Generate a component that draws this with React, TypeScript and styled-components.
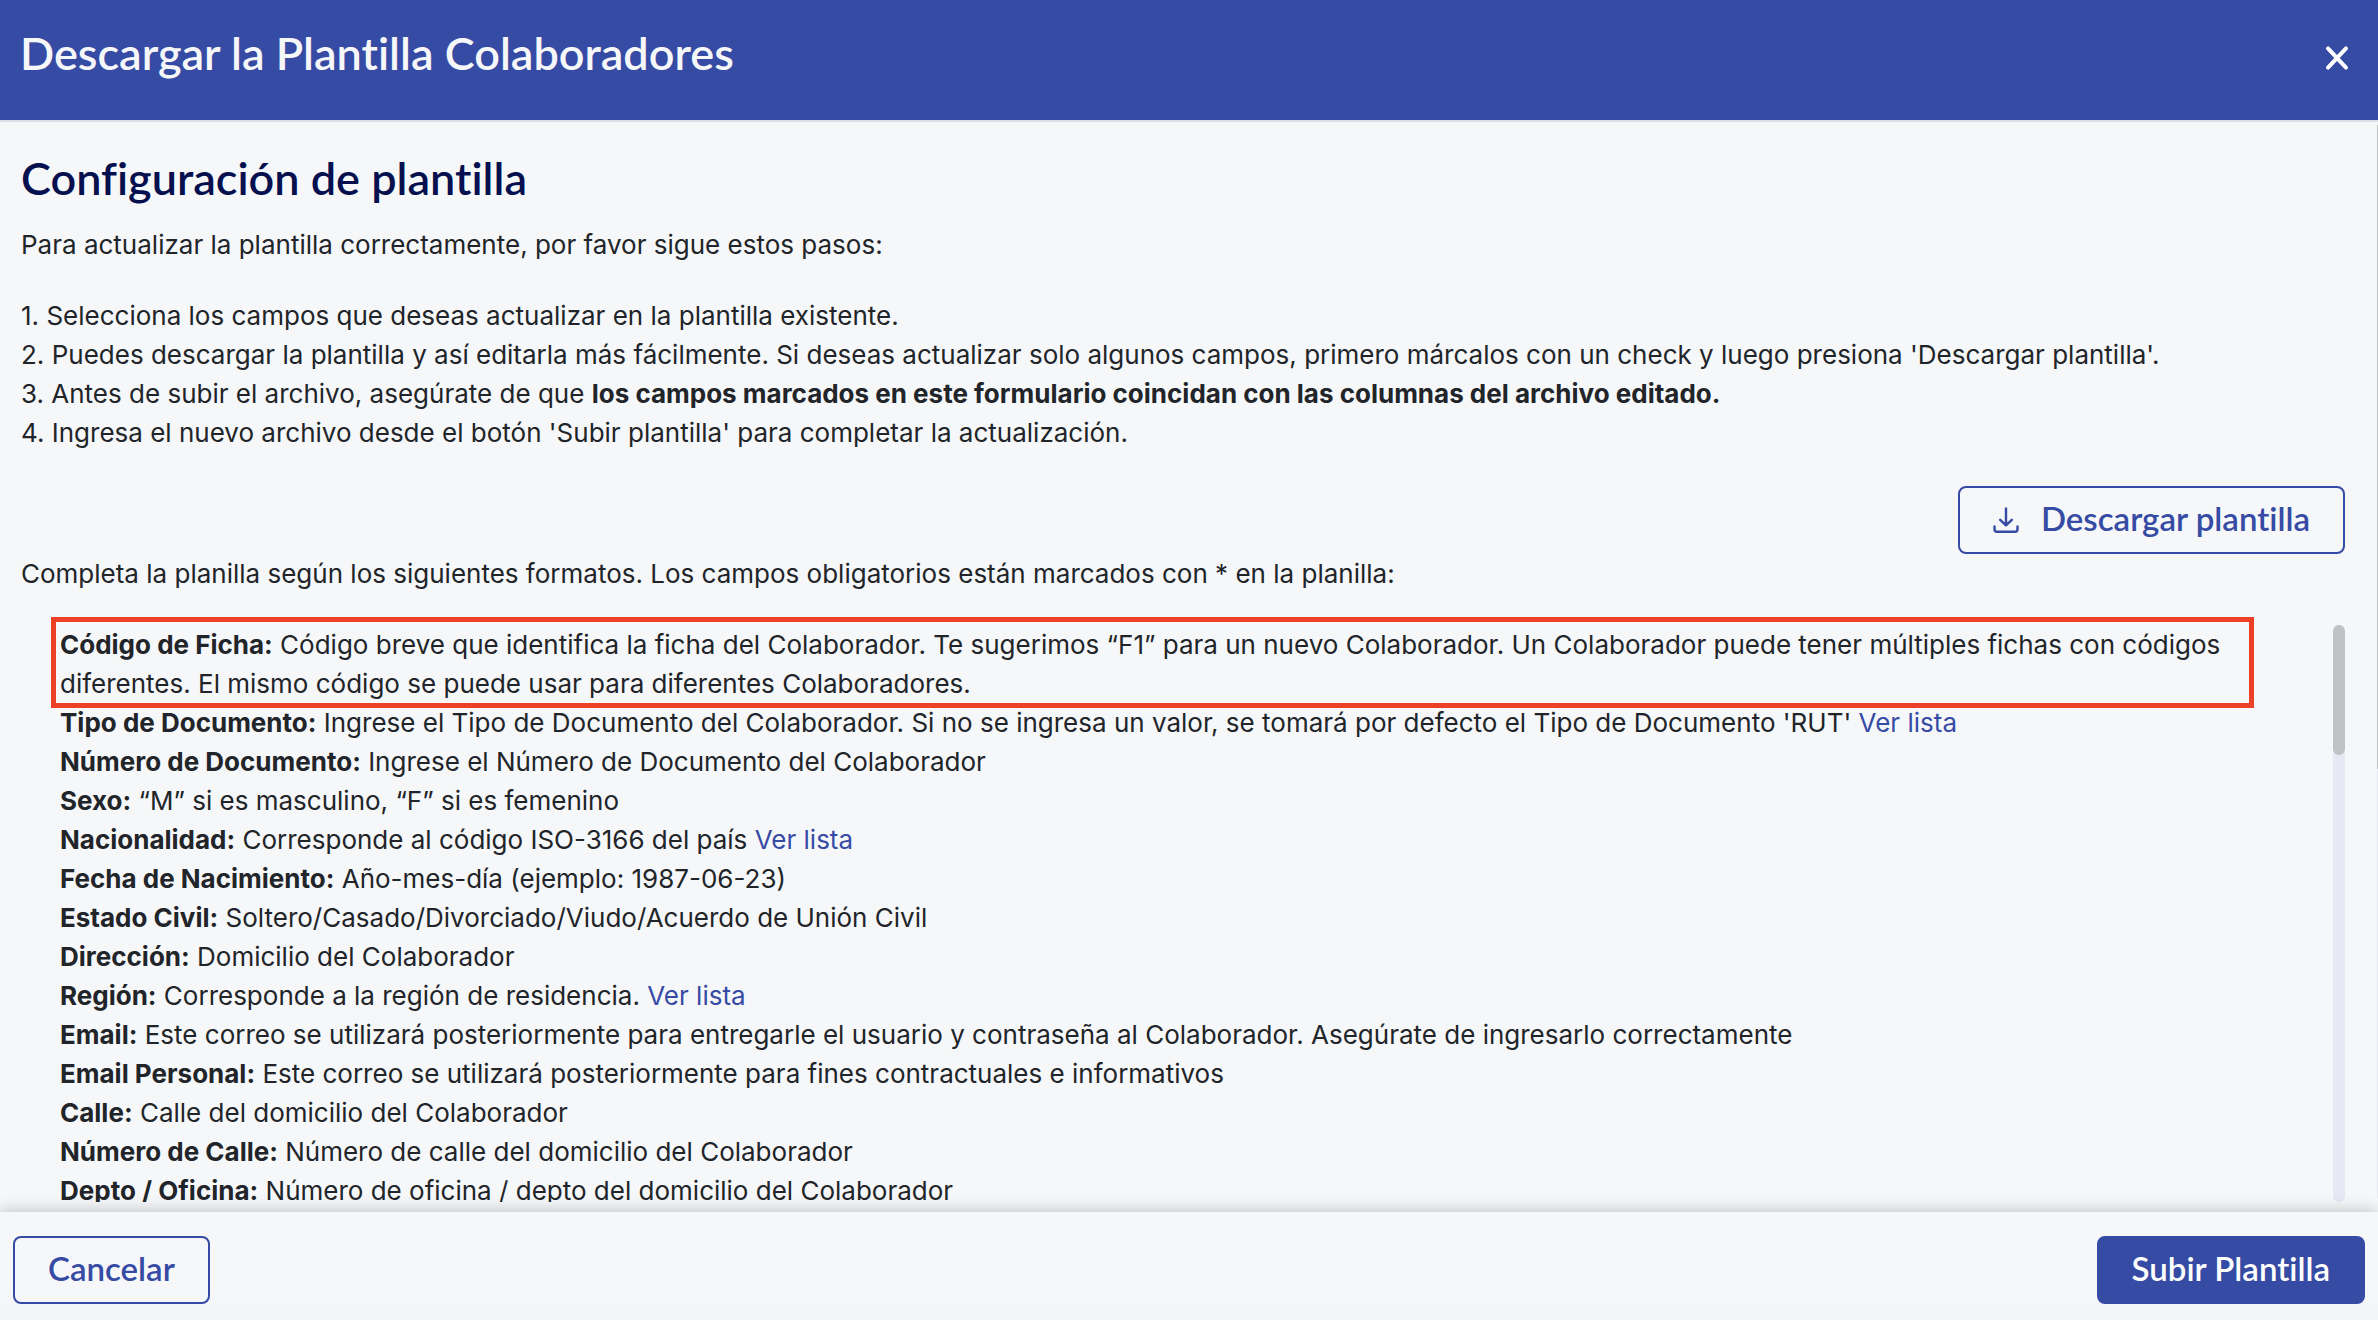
import React from "react";
import styled, { createGlobalStyle, css } from "styled-components";

const color = {
  primary: "#364ba4",
  surface: "#f6f7f9",
  heading: "#06104f",
  text: "#212529",
  line: "#dee0e8",
  track: "#e6e8f3",
  thumb: "#c1c2c4",
  mark: "#ec4027",
};

const GlobalStyle = createGlobalStyle`
  *, *::before, *::after { box-sizing: border-box; }
  body {
    margin: 0;
    background: ${color.surface};
    color: ${color.text};
    font: 400 26px/39px Inter, "Noto Sans", sans-serif;
  }
  h1, h2, p, ol, ul { margin: 0; padding: 0; }
`;

const Dialog = styled.section`
  display: flex;
  flex-direction: column;
  height: 100vh;
  background: ${color.surface};
`;

const Header = styled.header`
  display: flex;
  justify-content: space-between;
  align-items: flex-start;
  padding: 26px 20px 30px;
  background: ${color.primary};
  border-bottom: 2px solid ${color.line};
`;

const titleText = css`
  font: 600 45px/54px Lato, "Noto Sans", sans-serif;
  font-variant-ligatures: no-common-ligatures;
`;

const Title = styled.h1`
  ${titleText}
  color: ${color.surface};
`;

const CloseButton = styled.button`
  display: grid;
  place-items: center;
  width: 42px;
  height: 64px;
  padding: 0;
  border: 0;
  background: none;
  color: #fff;
  cursor: pointer;
`;

const Body = styled.div`
  display: flex;
  flex: 1;
  min-height: 0;
`;

const Content = styled.main`
  display: flex;
  flex: 1;
  flex-direction: column;
  min-width: 0;
  padding: 29px 32px 10px 21px;
`;

const Heading = styled.h2`
  ${titleText}
  margin-bottom: 20px;
  color: ${color.heading};
`;

const Steps = styled.ol`
  margin: 32px 0 34px;
  list-style-position: inside;
  list-style-type: none;
  counter-reset: step;
`;

const Step = styled.li`
  counter-increment: step;

  &::before {
    content: counter(step) ". ";
  }
`;

const Button = styled.button<{ $solid?: boolean }>`
  display: inline-flex;
  align-items: center;
  justify-content: center;
  gap: 22px;
  height: 68px;
  padding: 0 33px 4px;
  border: 2px solid ${color.primary};
  border-radius: 8px;
  background: ${(p) => (p.$solid ? color.primary : "transparent")};
  color: ${(p) => (p.$solid ? "#fff" : color.primary)};
  font: 600 33px/40px Lato, "Noto Sans", sans-serif;
  font-variant-ligatures: no-common-ligatures;
  white-space: nowrap;
  cursor: pointer;

  svg {
    margin-top: 4px;
  }
`;

const Actions = styled.div`
  display: flex;
  justify-content: flex-end;
`;

const Formats = styled.div`
  display: flex;
  flex: 1;
  gap: 79px;
  min-height: 0;
  margin: 24px 0 0 30px;
`;

const FieldList = styled.ul`
  flex: 1;
  padding: 8px 10px 0 9px;
  overflow-y: auto;
  scrollbar-width: none;
  list-style: none;
`;

const Field = styled.li<{ $marked?: boolean }>`
  ${(p) =>
    p.$marked &&
    css`
      position: relative;

      &::after {
        content: "";
        position: absolute;
        inset: -8px -10px -5px -9px;
        border: 5px solid ${color.mark};
        pointer-events: none;
      }
    `}
`;

const ListLink = styled.a`
  color: ${color.primary};
  text-decoration: none;
`;

const Track = styled.div`
  width: 12px;
  margin-top: 8px;
  border-radius: 6px;
  background: ${color.track};
`;

const Thumb = styled.div`
  height: 130px;
  border-radius: 6px;
  background: ${color.thumb};
`;

const EdgeTrack = styled.div`
  width: 1px;
  margin: 3px 0 14px;
  background: ${color.track};
`;

const EdgeThumb = styled.div`
  height: 60%;
  background: ${color.thumb};
`;

const Footer = styled.footer`
  display: flex;
  justify-content: space-between;
  padding: 24px 13px 16px;
  background: linear-gradient(${color.surface} 70%, #f3f4f7);
  box-shadow: 0 0 16px rgba(0, 0, 0, 0.25);
`;

const CloseIcon = () => (
  <svg width="24" height="26" viewBox="0 0 24 26" fill="none" stroke="currentColor" strokeWidth="4" strokeLinecap="round" aria-hidden="true">
    <path d="M3 3.4L21 22.6M21 3.4L3 22.6" />
  </svg>
);

const DownloadIcon = () => (
  <svg width="26" height="26" viewBox="0 0 26 26" fill="none" stroke="currentColor" strokeWidth="2.4" strokeLinecap="round" strokeLinejoin="round" aria-hidden="true">
    <path d="M13 1.5V18.2M7.2 12.8L13 18.4L18.8 12.8M1.5 19.5V22.3Q1.5 24.7 3.9 24.7H22.1Q24.5 24.7 24.5 22.3V19.5" />
  </svg>
);

type FieldInfo = { name: string; text: string; link?: boolean; marked?: boolean };

const fields: FieldInfo[] = [
  {
    name: "Código de Ficha",
    text: "Código breve que identifica la ficha del Colaborador. Te sugerimos “F1” para un nuevo Colaborador. Un Colaborador puede tener múltiples fichas con códigos diferentes. El mismo código se puede usar para diferentes Colaboradores.",
    marked: true,
  },
  {
    name: "Tipo de Documento",
    text: "Ingrese el Tipo de Documento del Colaborador. Si no se ingresa un valor, se tomará por defecto el Tipo de Documento 'RUT'",
    link: true,
  },
  { name: "Número de Documento", text: "Ingrese el Número de Documento del Colaborador" },
  { name: "Sexo", text: "“M” si es masculino, “F” si es femenino" },
  { name: "Nacionalidad", text: "Corresponde al código ISO-3166 del país", link: true },
  { name: "Fecha de Nacimiento", text: "Año-mes-día (ejemplo: 1987-06-23)" },
  { name: "Estado Civil", text: "Soltero/Casado/Divorciado/Viudo/Acuerdo de Unión Civil" },
  { name: "Dirección", text: "Domicilio del Colaborador" },
  { name: "Región", text: "Corresponde a la región de residencia.", link: true },
  {
    name: "Email",
    text: "Este correo se utilizará posteriormente para entregarle el usuario y contraseña al Colaborador. Asegúrate de ingresarlo correctamente",
  },
  { name: "Email Personal", text: "Este correo se utilizará posteriormente para fines contractuales e informativos" },
  { name: "Calle", text: "Calle del domicilio del Colaborador" },
  { name: "Número de Calle", text: "Número de calle del domicilio del Colaborador" },
  { name: "Depto / Oficina", text: "Número de oficina / depto del domicilio del Colaborador" },
];

export default function App() {
  return (
    <>
      <GlobalStyle />
      <Dialog role="dialog" aria-labelledby="dialog-title">
        <Header>
          <Title id="dialog-title">Descargar la Plantilla Colaboradores</Title>
          <CloseButton type="button" aria-label="Cerrar">
            <CloseIcon />
          </CloseButton>
        </Header>
        <Body>
          <Content>
            <Heading>Configuración de plantilla</Heading>
            <p>Para actualizar la plantilla correctamente, por favor sigue estos pasos:</p>
            <Steps>
              <Step>Selecciona los campos que deseas actualizar en la plantilla existente.</Step>
              <Step>
                Puedes descargar la plantilla y así editarla más fácilmente. Si deseas actualizar solo algunos campos,
                primero márcalos con un check y luego presiona 'Descargar plantilla'.
              </Step>
              <Step>
                Antes de subir el archivo, asegúrate de que{" "}
                <b>los campos marcados en este formulario coincidan con las columnas del archivo editado.</b>
              </Step>
              <Step>Ingresa el nuevo archivo desde el botón 'Subir plantilla' para completar la actualización.</Step>
            </Steps>
            <Actions>
              <Button type="button">
                <DownloadIcon />
                Descargar plantilla
              </Button>
            </Actions>
            <p>
              Completa la planilla según los siguientes formatos. Los campos obligatorios están marcados con * en la
              planilla:
            </p>
            <Formats>
              <FieldList>
                {fields.map((f) => (
                  <Field key={f.name} $marked={f.marked}>
                    <b>{f.name}:</b> {f.text}
                    {f.link && (
                      <>
                        {" "}
                        <ListLink href="#lista">Ver lista</ListLink>
                      </>
                    )}
                  </Field>
                ))}
              </FieldList>
              <Track>
                <Thumb />
              </Track>
            </Formats>
          </Content>
          <EdgeTrack>
            <EdgeThumb />
          </EdgeTrack>
        </Body>
        <Footer>
          <Button type="button">Cancelar</Button>
          <Button type="button" $solid>
            Subir Plantilla
          </Button>
        </Footer>
      </Dialog>
    </>
  );
}
